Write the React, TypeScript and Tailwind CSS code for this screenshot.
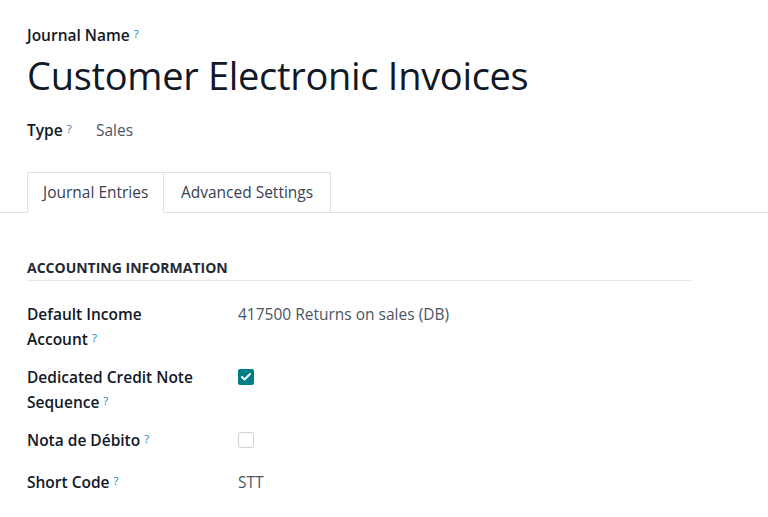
import { Check } from "lucide-react";

type Row = {
  label: string[];
  kind: "text" | "check";
  value?: string;
  checked?: boolean;
  extra?: string;
};

const rows: Row[] = [
  { label: ["Default Income", "Account"], kind: "text", value: "417500 Returns on sales (DB)" },
  { label: ["Dedicated Credit Note", "Sequence"], kind: "check", checked: true },
  { label: ["Nota de Débito"], kind: "check", checked: false, extra: "pb-[3px]" },
  { label: ["Short Code"], kind: "text", value: "STT" },
];

function Help() {
  return (
    <sup className="relative -top-[3px] ml-[4px] text-[11.5px] font-normal text-[#1b7fb8]">?</sup>
  );
}

function Checkbox({ checked }: { checked?: boolean }) {
  if (checked) {
    return (
      <span className="flex h-4 w-4 items-center justify-center rounded-[2px] bg-[#017e84]">
        <Check className="h-3 w-3 text-white" strokeWidth={4} />
      </span>
    );
  }
  return <span className="block h-4 w-4 rounded-[2px] border border-[#d4d4d4] bg-white" />;
}

export default function App() {
  return (
    <div className="min-h-[517px] bg-white font-['Open_Sans',sans-serif] text-[#111827]">
      <div className="px-[27px] pt-[24px]">
        <div className="text-[15.5px] font-[540] leading-[22px]">
          Journal Name
          <Help />
        </div>
        <h1 className="mt-[3px] text-[38px] font-normal leading-[52px] tracking-[-0.3px]">
          Customer Electronic Invoices
        </h1>
        <div className="mt-[17px] flex items-center text-[15.5px] leading-[24px]">
          <span className="w-[69px] font-[540]">
            Type
            <Help />
          </span>
          <span className="text-[#4b5563]">Sales</span>
        </div>
      </div>

      <div className="mt-[30px] flex border-b border-[#dee2e6] pl-[27px]">
        <div className="-mb-px flex h-[41px] items-center whitespace-nowrap border border-b-white border-[#dee2e6] bg-white px-[15px] text-[15.5px] text-[#374151]">
          Journal Entries
        </div>
        <div className="flex h-[40px] items-center whitespace-nowrap border border-l-0 border-b-0 border-[#dee2e6] px-[16.5px] text-[15.5px] text-[#374151]">
          Advanced Settings
        </div>
      </div>

      <div className="px-[27px] pt-[45px]">
        <div className="w-[665px] border-b border-[#e5e7eb] pb-[2px] text-[14px] font-bold uppercase leading-[20px] text-[#1f2937]">
          Accounting Information
        </div>
        <div className="mt-[21px] flex flex-col gap-[14px]">
          {rows.map((row) => (
            <div key={row.label.join(" ")} className={`flex text-[15.5px] leading-[24.5px] ${row.extra ?? ""}`}>
              <div className="w-[211px] font-[540]">
                {row.label.map((line, i) => (
                  <div key={line}>
                    {line}
                    {i === row.label.length - 1 && <Help />}
                  </div>
                ))}
              </div>
              <div className="flex h-[24.5px] items-center text-[#4b5563]">
                {row.kind === "text" ? row.value : <Checkbox checked={row.checked} />}
              </div>
            </div>
          ))}
        </div>
      </div>
    </div>
  );
}
